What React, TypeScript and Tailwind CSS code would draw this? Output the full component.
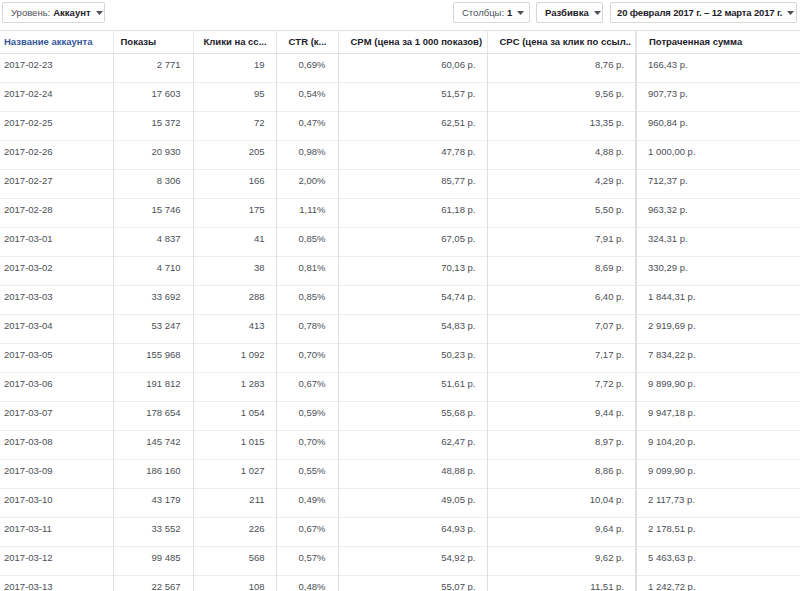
import type { ReactNode } from 'react';

const rows: string[][] = [
  ['2017-02-23', '2 771', '19', '0,69%', '60,06 р.', '8,76 р.', '166,43 р.'],
  ['2017-02-24', '17 603', '95', '0,54%', '51,57 р.', '9,56 р.', '907,73 р.'],
  ['2017-02-25', '15 372', '72', '0,47%', '62,51 р.', '13,35 р.', '960,84 р.'],
  ['2017-02-26', '20 930', '205', '0,98%', '47,78 р.', '4,88 р.', '1 000,00 р.'],
  ['2017-02-27', '8 306', '166', '2,00%', '85,77 р.', '4,29 р.', '712,37 р.'],
  ['2017-02-28', '15 746', '175', '1,11%', '61,18 р.', '5,50 р.', '963,32 р.'],
  ['2017-03-01', '4 837', '41', '0,85%', '67,05 р.', '7,91 р.', '324,31 р.'],
  ['2017-03-02', '4 710', '38', '0,81%', '70,13 р.', '8,69 р.', '330,29 р.'],
  ['2017-03-03', '33 692', '288', '0,85%', '54,74 р.', '6,40 р.', '1 844,31 р.'],
  ['2017-03-04', '53 247', '413', '0,78%', '54,83 р.', '7,07 р.', '2 919,69 р.'],
  ['2017-03-05', '155 968', '1 092', '0,70%', '50,23 р.', '7,17 р.', '7 834,22 р.'],
  ['2017-03-06', '191 812', '1 283', '0,67%', '51,61 р.', '7,72 р.', '9 899,90 р.'],
  ['2017-03-07', '178 654', '1 054', '0,59%', '55,68 р.', '9,44 р.', '9 947,18 р.'],
  ['2017-03-08', '145 742', '1 015', '0,70%', '62,47 р.', '8,97 р.', '9 104,20 р.'],
  ['2017-03-09', '186 160', '1 027', '0,55%', '48,88 р.', '8,86 р.', '9 099,90 р.'],
  ['2017-03-10', '43 179', '211', '0,49%', '49,05 р.', '10,04 р.', '2 117,73 р.'],
  ['2017-03-11', '33 552', '226', '0,67%', '64,93 р.', '9,64 р.', '2 178,51 р.'],
  ['2017-03-12', '99 485', '568', '0,57%', '54,92 р.', '9,62 р.', '5 463,63 р.'],
  ['2017-03-13', '22 567', '108', '0,48%', '55,07 р.', '11,51 р.', '1 242,72 р.'],
];

function Caret() {
  return (
    <svg width="7" height="4" viewBox="0 0 7 4" className="ml-[5px] shrink-0">
      <path d="M0 0h7L3.5 4z" fill="#4b4f56" />
    </svg>
  );
}

function DropButton({ children, className = '' }: { children: ReactNode; className?: string }) {
  return (
    <button
      className={`flex h-[21px] shrink-0 items-center overflow-hidden whitespace-nowrap rounded-[2px] border border-[#d3d6db] bg-white text-[9.5px] leading-[12px] text-[#4b4f56] ${className}`}
    >
      {children}
      <Caret />
    </button>
  );
}

const heads = [
  { label: 'Название аккаунта', cls: 'pl-[4px] text-[#365899]' },
  { label: 'Показы', cls: 'pl-[7px]' },
  { label: 'Клики на сс...', cls: 'pl-[10px]' },
  { label: 'CTR (к...', cls: 'pl-[12px]' },
  { label: 'CPM (цена за 1 000 показов)', cls: 'pl-[12px]' },
  { label: 'CPC (цена за клик по ссыл..', cls: 'pl-[12px] border-r-2' },
  { label: 'Потраченная сумма', cls: 'pl-[12px] border-r-0' },
];

export default function App() {
  return (
    <div className="h-[591px] w-[800px] overflow-hidden bg-white font-['Liberation_Sans',Arial,sans-serif] text-[9.5px] leading-[12px] text-[#4b4f56]">
      <div className="flex h-[30px] items-start justify-between pl-[2px] pr-[3px] pt-[2px]">
        <DropButton className="w-[103px] px-[8px]">
          <span>Уровень:</span>
          <span className="ml-[3px] font-bold text-[#1d2129]">Аккаунт</span>
        </DropButton>
        <div className="flex gap-[6px]">
          <DropButton className="w-[77px] px-[8px]">
            <span>Столбцы:</span>
            <span className="ml-[3px] font-bold text-[#1d2129]">1</span>
          </DropButton>
          <DropButton className="w-[67px] px-[8px]">
            <span className="font-bold text-[#1d2129]">Разбивка</span>
          </DropButton>
          <DropButton className="ml-[1px] w-[187px] justify-between pl-[6px] pr-[7px]">
            <span className="font-bold tracking-[-0.15px] text-[#1d2129]">20 февраля 2017 г. – 12 марта 2017 г.</span>
          </DropButton>
        </div>
      </div>

      <table className="w-[800px] table-fixed border-collapse">
        <colgroup>
          <col className="w-[113px]" />
          <col className="w-[80px]" />
          <col className="w-[83px]" />
          <col className="w-[62px]" />
          <col className="w-[149px]" />
          <col className="w-[149px]" />
          <col className="w-[164px]" />
        </colgroup>
        <thead>
          <tr className="h-[23px]">
            {heads.map((h) => (
              <th
                key={h.label}
                className={`overflow-hidden whitespace-nowrap border-y border-r border-y-[#dddfe2] border-r-[#e5e6e9] text-left align-middle font-bold text-[#1d2129] ${h.cls}`}
              >
                {h.label}
              </th>
            ))}
          </tr>
        </thead>
        <tbody>
          {rows.map((r) => (
            <tr key={r[0]} className="h-[29px] border-b border-[#ebecee]">
              <td className="border-r border-[#dddfe2] pl-[4px] pt-[5px] align-top">{r[0]}</td>
              <td className="border-r border-[#dddfe2] pr-[12px] pt-[5px] text-right align-top">{r[1]}</td>
              <td className="border-r border-[#dddfe2] pr-[11px] pt-[5px] text-right align-top">{r[2]}</td>
              <td className="border-r border-[#dddfe2] pr-[12px] pt-[5px] text-right align-top">{r[3]}</td>
              <td className="border-r border-[#dddfe2] pr-[11px] pt-[5px] text-right align-top">{r[4]}</td>
              <td className="border-r-2 border-[#dddfe2] pr-[11px] pt-[5px] text-right align-top">{r[5]}</td>
              <td className="pl-[11px] pt-[5px] align-top">{r[6]}</td>
            </tr>
          ))}
        </tbody>
      </table>
    </div>
  );
}
